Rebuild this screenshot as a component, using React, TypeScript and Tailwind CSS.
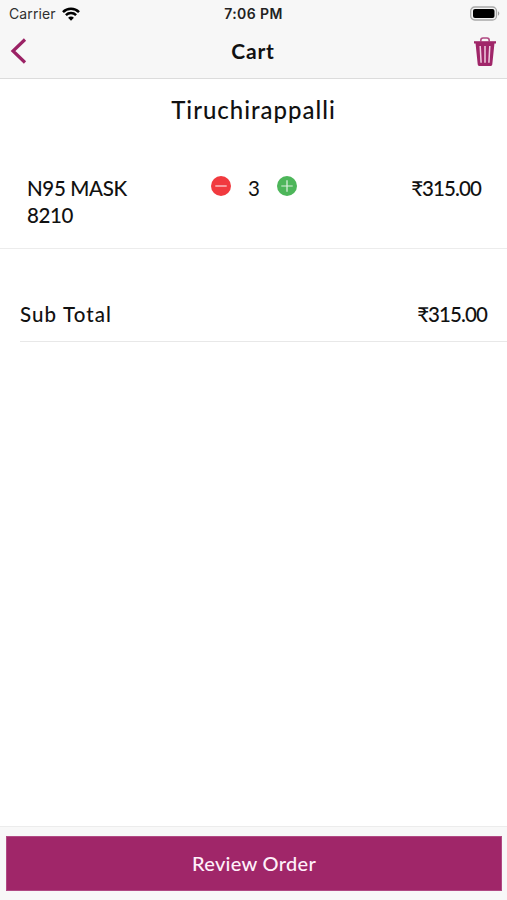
import type { ReactNode } from 'react'

interface CartItem {
  name: string
  quantity: number
  price: string
}

const STORE = 'Tiruchirappalli'

const ITEMS: CartItem[] = [{ name: 'N95 MASK 8210', quantity: 3, price: '₹315.00' }]

const SUB_TOTAL = '₹315.00'

export default function App() {
  return (
    <div className="flex h-[900px] w-[507px] flex-col overflow-hidden bg-white font-['Lato','Noto_Sans',sans-serif] text-[#111111]">
      <header className="h-[79px] shrink-0 border-b border-[#dcdcdc] bg-[#f7f7f7]">
        <StatusBar />
        <NavBar />
      </header>

      <main className="flex-1">
        <h2 className="h-[84px] pt-[15px] text-center text-[24px] leading-8 font-medium tracking-[0.98px]">{STORE}</h2>
        {ITEMS.map((item) => (
          <CartRow key={item.name} item={item} />
        ))}
        <div className="mt-[40px] ml-[20px] flex h-[53px] justify-between border-b border-[#e8e8e8] pt-[12px] pr-[20px] text-[20.5px] leading-[27px] font-medium">
          <span className="tracking-[1.1px]">Sub Total</span>
          <span className="tracking-[-0.9px]">{SUB_TOTAL}</span>
        </div>
      </main>

      <footer className="h-[74px] shrink-0 border-t border-[#ececec] bg-[#f8f8f8] pt-[9px] pr-[5px] pl-[6px]">
        <button type="button" className="h-[55px] w-full border border-[#b14a84] bg-[#a02669] pb-[2px] text-[20px] font-medium tracking-[0.3px] text-[#fff0fa]">
          Review Order
        </button>
      </footer>
    </div>
  )
}

function StatusBar() {
  return (
    <div className="flex h-[27px] items-center justify-between pr-[7px] pl-[9px] font-['Inter',sans-serif] text-[14px] leading-[17px]">
      <div className="flex w-[100px] items-center gap-[6px]">
        <span className="tracking-[0.1px] text-[#303030]">Carrier</span>
        <WifiIcon />
      </div>
      <span className="pr-[2px] text-[14px] font-semibold tracking-[0.4px] text-[#222222]">7:06 PM</span>
      <div className="flex w-[100px] justify-end">
        <BatteryIcon />
      </div>
    </div>
  )
}

function NavBar() {
  return (
    <nav className="flex h-[48px] items-center justify-between pr-[11px] pl-[10px]">
      <button type="button" aria-label="Back" className="flex w-[40px]">
        <svg width="18" height="28" viewBox="0 0 18 28" className="fill-none stroke-[#9b2265] stroke-[3.2]">
          <path d="M15 2.5 3 14l12 11.5" />
        </svg>
      </button>
      <h1 className="text-[21px] leading-6 font-bold tracking-[0.8px]">Cart</h1>
      <button type="button" aria-label="Empty cart" className="flex w-[40px] justify-end pt-[2px]">
        <TrashIcon />
      </button>
    </nav>
  )
}

function CartRow({ item }: { item: CartItem }) {
  return (
    <div className="flex h-[86px] border-b border-[#ececec] pt-[12px] pr-[26px] pl-[27px] text-[20.5px] leading-[27px] font-medium">
      <span className="w-[184px] pr-[60px] tracking-[-0.35px]">{item.name}</span>
      <div className="flex h-[22px] w-[86px] items-center justify-between">
        <StepButton label="Remove one" className="bg-[#f13a3f]">
          <path d="M4.5 10.5h12" />
        </StepButton>
        <span className="pt-[4px] font-normal">{item.quantity}</span>
        <StepButton label="Add one" className="bg-[#4db65a]">
          <path d="M4.5 10.5h12M10.5 4.5v12" />
        </StepButton>
      </div>
      <span className="ml-auto tracking-[-0.9px]">{item.price}</span>
    </div>
  )
}

function StepButton({ label, className, children }: { label: string; className: string; children: ReactNode }) {
  return (
    <button type="button" aria-label={label} className={`h-[20px] w-[20px] rounded-full ${className}`}>
      <svg width="20" height="20" viewBox="0 0 21 21" className="fill-none stroke-white/80 stroke-[1.3]">
        {children}
      </svg>
    </button>
  )
}

function WifiIcon() {
  return (
    <svg width="18" height="14" viewBox="0 0 18 14" className="fill-none stroke-black stroke-[2.5]" aria-hidden="true">
      <path d="M1 5.1C5.3.6 12.7.6 17 5.1" />
      <path d="M3.9 8.2c2.8-2.8 7.4-2.8 10.2 0" />
      <path d="M9 13.8 6.1 10.8c1.5-1.6 4.3-1.6 5.8 0Z" className="fill-black stroke-none" />
    </svg>
  )
}

function BatteryIcon() {
  return (
    <svg width="31" height="16" viewBox="0 0 31 16" aria-hidden="true">
      <rect x="1.7" y="1" width="25.8" height="13" rx="4" className="fill-[#f4f4f4] stroke-[#a9a9a9] stroke-[1.3]" />
      <rect x="4" y="3" width="21.5" height="9" rx="2" className="fill-black" />
      <path d="M29 5.3v4.4c1.8-.7 1.8-3.7 0-4.4Z" className="fill-[#a0a0a0]" />
    </svg>
  )
}

function TrashIcon() {
  return (
    <svg width="22" height="30" viewBox="0 0 22 30" className="fill-none">
      <path d="M6.8 4.5V3.4C6.8 1.7 7.6 1 9 1h4c1.4 0 2.2.7 2.2 2.4v1.1" className="stroke-[#b04a82] stroke-[1.6]" />
      <path d="M0 4.2h22v2.3H0Z" className="fill-[#a02669]" />
      <path d="M1.5 6h19l-2.2 21.2c-.1 1.2-.8 1.8-2 1.8H5.7c-1.2 0-1.9-.6-2-1.8Z" className="fill-[#a02669]" />
      <path d="m6.2 9 .9 16.8M11 9v16.8M15.8 9l-.9 16.8" className="stroke-[#efcde0] stroke-[1.5]" />
    </svg>
  )
}
